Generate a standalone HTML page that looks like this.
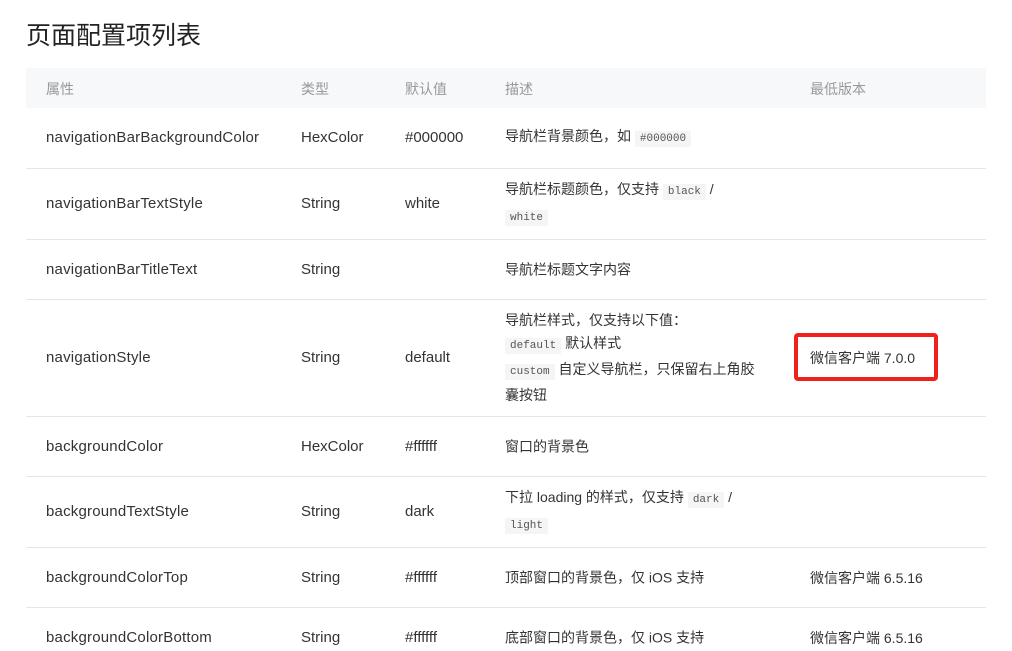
<!DOCTYPE html>
<html><head><meta charset="utf-8"><style>
body{margin:0;width:1012px;height:651px;background:#fff;overflow:hidden;position:relative;font-family:"Liberation Sans","Noto Sans CJK SC",sans-serif;color:#333}
.t{position:absolute;left:26px;top:17px;font-size:25px;color:#222;line-height:38px}
.hd{position:absolute;left:26px;top:68px;width:960px;height:40px;background:#f7f8fa}
.ln{position:absolute;left:26px;width:960px;height:1px;background:#e6e6e6}
.c{position:absolute;font-size:15px;line-height:20px;transform:translateY(-50%);white-space:nowrap;margin-top:1px}
.l{letter-spacing:0.2px}
.h{color:#999;font-size:14px}
.d{font-size:14px;line-height:23px;white-space:normal;width:262px}
code{font-family:"Liberation Mono",monospace;font-size:11px;background:#f5f5f5;padding:2px 5px;color:#555}
.box{position:absolute;left:794px;top:333px;width:136px;height:40px;border:4px solid #f0211b;border-radius:4px}
</style></head><body>
<div class="t">页面配置项列表</div>
<div class="hd"></div>
<div class="c h" style="left:46px;top:88px">属性</div>
<div class="c h" style="left:301px;top:88px">类型</div>
<div class="c h" style="left:405px;top:88px">默认值</div>
<div class="c h" style="left:505px;top:88px">描述</div>
<div class="c h" style="left:810px;top:88px">最低版本</div>

<div class="ln" style="top:168px"></div>
<div class="ln" style="top:239px"></div>
<div class="ln" style="top:299px"></div>
<div class="ln" style="top:416px"></div>
<div class="ln" style="top:476px"></div>
<div class="ln" style="top:547px"></div>
<div class="ln" style="top:607px"></div>

<div class="c l" style="left:46px;top:137px">navigationBarBackgroundColor</div>
<div class="c" style="left:301px;top:137px">HexColor</div>
<div class="c" style="left:405px;top:137px">#000000</div>
<div class="c d" style="left:505px;top:137px">导航栏背景颜色，如 <code>#000000</code></div>

<div class="c l" style="left:46px;top:203px">navigationBarTextStyle</div>
<div class="c" style="left:301px;top:203px">String</div>
<div class="c" style="left:405px;top:203px">white</div>
<div class="c d" style="left:505px;top:203px">导航栏标题颜色，仅支持 <code>black</code> /<br><code>white</code></div>

<div class="c l" style="left:46px;top:269px">navigationBarTitleText</div>
<div class="c" style="left:301px;top:269px">String</div>
<div class="c d" style="left:505px;top:269px">导航栏标题文字内容</div>

<div class="c l" style="left:46px;top:357px">navigationStyle</div>
<div class="c" style="left:301px;top:357px">String</div>
<div class="c" style="left:405px;top:357px">default</div>
<div class="c d" style="left:505px;top:357px">导航栏样式，仅支持以下值：<br><code>default</code> 默认样式<br><code>custom</code> 自定义导航栏，只保留右上角胶<br>囊按钮</div>
<div class="c" style="left:810px;top:357px;font-size:14px">微信客户端 7.0.0</div>
<div class="box"></div>

<div class="c l" style="left:46px;top:446px">backgroundColor</div>
<div class="c" style="left:301px;top:446px">HexColor</div>
<div class="c" style="left:405px;top:446px">#ffffff</div>
<div class="c d" style="left:505px;top:446px">窗口的背景色</div>

<div class="c l" style="left:46px;top:511px">backgroundTextStyle</div>
<div class="c" style="left:301px;top:511px">String</div>
<div class="c" style="left:405px;top:511px">dark</div>
<div class="c d" style="left:505px;top:511px">下拉 loading 的样式，仅支持 <code>dark</code> /<br><code>light</code></div>

<div class="c l" style="left:46px;top:577px">backgroundColorTop</div>
<div class="c" style="left:301px;top:577px">String</div>
<div class="c" style="left:405px;top:577px">#ffffff</div>
<div class="c d" style="left:505px;top:577px">顶部窗口的背景色，仅 iOS 支持</div>
<div class="c" style="left:810px;top:577px;font-size:14px">微信客户端 6.5.16</div>

<div class="c l" style="left:46px;top:637px">backgroundColorBottom</div>
<div class="c" style="left:301px;top:637px">String</div>
<div class="c" style="left:405px;top:637px">#ffffff</div>
<div class="c d" style="left:505px;top:637px">底部窗口的背景色，仅 iOS 支持</div>
<div class="c" style="left:810px;top:637px;font-size:14px">微信客户端 6.5.16</div>
</body></html>
